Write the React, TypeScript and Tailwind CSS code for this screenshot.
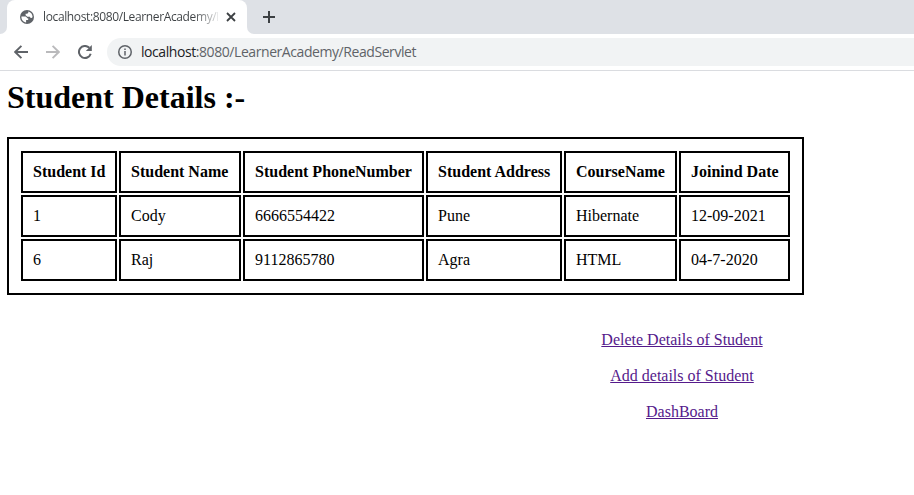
import React from "react";

const columns = [
  { label: "Student Id", width: "w-[96px]" },
  { label: "Student Name", width: "w-[122px]" },
  { label: "Student PhoneNumber", width: "w-[181px]" },
  { label: "Student Address", width: "w-[136px]" },
  { label: "CourseName", width: "w-[113px]" },
  { label: "Joinind Date", width: "w-[111px]" },
];

const students = [
  ["1", "Cody", "6666554422", "Pune", "Hibernate", "12-09-2021"],
  ["6", "Raj", "9112865780", "Agra", "HTML", "04-7-2020"],
];

const links = ["Delete Details of Student", "Add details of Student", "DashBoard"];

function Globe() {
  return (
    <svg className="size-[14px] shrink-0" viewBox="0 0 14 14">
      <circle cx="7" cy="7" r="7" fill="#5f6368" />
      <path
        d="M1.4 6.6H4.6C6.2 6.6 7 7.3 7 8.3H8.2V10H6.1V12.5C3.2 12.2 1.3 9.8 1.4 6.6Z"
        fill="#fff"
      />
      <path
        d="M8.3 1.6C10.6 2.1 12.5 4.2 12.6 7C12.2 7.9 11.4 8.3 10.6 7.9L9.9 6.8H7.4L5.6 5.2V3.8H7.2L8.3 2.8Z"
        fill="#fff"
      />
    </svg>
  );
}

function Arrow({ className }: { className: string }) {
  return (
    <svg className={className} viewBox="0 0 14 14" fill="none" stroke="currentColor" strokeWidth="1.9">
      <path d="M14 7H1.5M7.4.8 1.2 7l6.2 6.2" />
    </svg>
  );
}

function Reload({ className }: { className: string }) {
  return (
    <svg className={className} viewBox="0 0 14 14">
      <path d="M12.7 8.7A6 6 0 1 1 11.3 2.8" fill="none" stroke="currentColor" strokeWidth="2" />
      <path d="M13.8 0V6H7.8Z" fill="currentColor" />
    </svg>
  );
}

function Info({ className }: { className: string }) {
  return (
    <svg className={className} viewBox="0 0 14 14">
      <circle cx="7" cy="7" r="6.25" fill="none" stroke="currentColor" strokeWidth="1.5" />
      <path d="M6.25 3.4h1.5v1.5h-1.5zM6.25 6.1h1.5v4.5h-1.5z" fill="currentColor" />
    </svg>
  );
}

function TabStrip() {
  return (
    <div className="flex h-[34px] bg-[#dee1e6]">
      <div className="w-[7px] bg-white">
        <div className="h-full rounded-br-[7px] bg-[#dee1e6]" />
      </div>
      <div className="bg-[#dee1e6]">
        <div className="flex h-full w-[240px] items-center rounded-t-[8px] bg-white pl-[13px]">
          <Globe />
          <span className="ml-[9px] w-[175px] shrink-0 whitespace-nowrap bg-[linear-gradient(to_right,#3c4043_150px,transparent_180px)] bg-clip-text text-[12px] leading-[18px] tracking-[-0.37px] text-transparent">
            localhost:8080/LearnerAcademy/R
          </span>
          <svg className="ml-[8px] size-[10px] shrink-0" viewBox="0 0 10 10" fill="none" stroke="#3c4043" strokeWidth="1.8">
            <path d="M1 1 9 9M9 1 1 9" />
          </svg>
        </div>
      </div>
      <div className="flex flex-1 bg-white">
        <div className="flex flex-1 items-center rounded-bl-[7px] bg-[#dee1e6] pl-[16px]">
          <svg className="size-[12px]" viewBox="0 0 12 12" fill="none" stroke="#3c4043" strokeWidth="2">
            <path d="M6 0v12M0 6h12" />
          </svg>
        </div>
      </div>
    </div>
  );
}

function Toolbar() {
  return (
    <div className="flex h-[37px] items-center border-b border-[#dadce0] bg-white pl-[14px]">
      <Arrow className="size-[14px] text-[#5f6368]" />
      <Arrow className="ml-[18px] size-[14px] rotate-180 text-[#bababc]" />
      <Reload className="ml-[18px] size-[14px] text-[#5f6368]" />
      <div className="ml-[15px] flex h-[28px] flex-1 items-center rounded-l-full bg-[#f1f3f4] pl-[11px]">
        <Info className="size-[14px] text-[#5f6368]" />
        <span className="ml-[9px] whitespace-nowrap text-[14px] leading-[20px] tracking-[-0.43px] text-[#5f6368]">
          <span className="text-[#202124]">localhost</span>:8080/LearnerAcademy/ReadServlet
        </span>
      </div>
    </div>
  );
}

export default function App() {
  return (
    <div className="h-[495px] w-[914px] overflow-hidden bg-white font-['Open_Sans',sans-serif]">
      <TabStrip />
      <Toolbar />
      <main className="pl-[7px] pt-[8px] font-['Liberation_Serif',serif] text-[16px] leading-[18px] text-black">
        <h1 className="h-[58px] text-[32px] font-bold leading-[37px]">Student Details :-</h1>
        <table className="w-[797px] table-fixed border-separate border-spacing-[2px] border-2 border-black p-[10px]">
          <thead>
            <tr>
              {columns.map((c) => (
                <th key={c.label} className={`${c.width} whitespace-nowrap border-2 border-black p-[10px] text-left font-bold`}>
                  {c.label}
                </th>
              ))}
            </tr>
          </thead>
          <tbody>
            {students.map((row) => (
              <tr key={row[0]}>
                {row.map((value) => (
                  <td key={value} className="border-2 border-black p-[10px]">{value}</td>
                ))}
              </tr>
            ))}
          </tbody>
        </table>
        <nav className="ml-[575px] mt-[36px] flex w-[200px] flex-col items-center gap-[18px]">
          {links.map((l) => (
            <a key={l} href="#" className="text-[#551a8b] underline">{l}</a>
          ))}
        </nav>
      </main>
    </div>
  );
}
